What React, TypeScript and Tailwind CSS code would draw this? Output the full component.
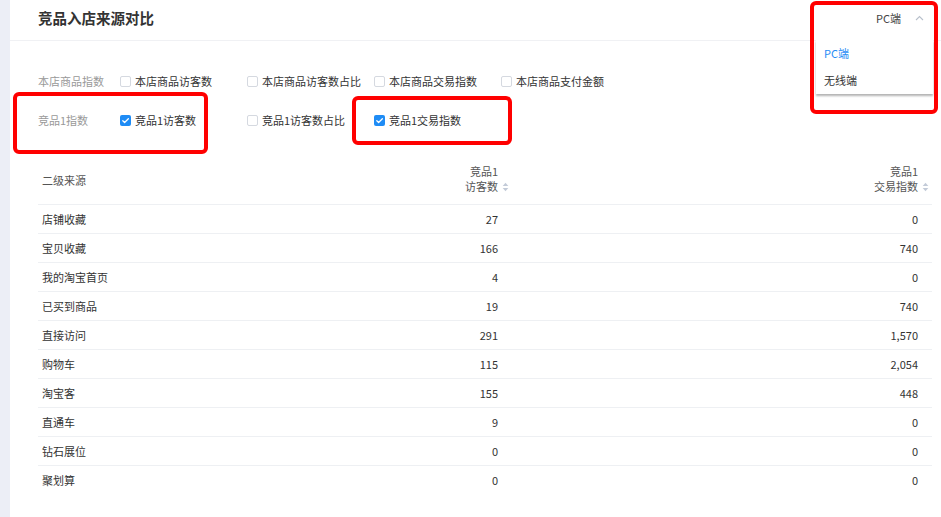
import React from 'react'

const STORE_OPTIONS = [
  { label: '本店商品访客数', checked: false },
  { label: '本店商品访客数占比', checked: false },
  { label: '本店商品交易指数', checked: false },
  { label: '本店商品支付金额', checked: false },
]

const RIVAL_OPTIONS = [
  { label: '竞品1访客数', checked: true },
  { label: '竞品1访客数占比', checked: false },
  { label: '竞品1交易指数', checked: true },
]

const ROWS = [
  { source: '店铺收藏', visitors: '27', trade: '0' },
  { source: '宝贝收藏', visitors: '166', trade: '740' },
  { source: '我的淘宝首页', visitors: '4', trade: '0' },
  { source: '已买到商品', visitors: '19', trade: '740' },
  { source: '直接访问', visitors: '291', trade: '1,570' },
  { source: '购物车', visitors: '115', trade: '2,054' },
  { source: '淘宝客', visitors: '155', trade: '448' },
  { source: '直通车', visitors: '9', trade: '0' },
  { source: '钻石展位', visitors: '0', trade: '0' },
  { source: '聚划算', visitors: '0', trade: '0' },
]

function Checkbox({ checked }: { checked: boolean }) {
  if (checked) {
    return (
      <span className="flex h-[11px] w-[11px] shrink-0 items-center justify-center rounded-[2px] bg-[#1f8cf5]">
        <svg className="h-[9px] w-[9px]" viewBox="0 0 10 10" fill="none">
          <path d="M2 5.2l2 2L8.2 3" stroke="#fff" strokeWidth={1.4} strokeLinecap="round" strokeLinejoin="round" />
        </svg>
      </span>
    )
  }
  return <span className="h-[11px] w-[11px] shrink-0 rounded-[2px] border border-[#d5d9e0] bg-white" />
}

function FilterRow({ title, options }: { title: string; options: { label: string; checked: boolean }[] }) {
  return (
    <div className="flex h-[39px] items-center">
      <span className="w-[82px] text-[#999]">{title}</span>
      {options.map((opt) => (
        <label key={opt.label} className="flex w-[127px] items-center gap-[4px] text-[#333]">
          <Checkbox checked={opt.checked} />
          <span>{opt.label}</span>
        </label>
      ))}
    </div>
  )
}

function SortIcon() {
  return (
    <svg className="h-[10px] w-[9px] shrink-0" viewBox="0 0 9 10" fill="#c3cbd8">
      <path d="M4.5 0.8L7.3 4H1.7z" />
      <path d="M4.5 9.2L1.7 6h5.6z" />
    </svg>
  )
}

function SortHeader({ top, bottom }: { top: string; bottom: string }) {
  return (
    <div className="flex items-start justify-end gap-[3px] pr-[2px] pt-[7px] leading-[15px]">
      <div className="text-right">
        <div>{top}</div>
        <div>{bottom}</div>
      </div>
      <div className="flex h-[30px] items-end pb-[2px]">
        <SortIcon />
      </div>
    </div>
  )
}

export default function App() {
  return (
    <div
      className="relative flex h-[517px] w-[941px] overflow-hidden bg-white text-[11px]"
      style={{ fontFamily: '"Noto Sans CJK SC", "Liberation Sans", sans-serif' }}
    >
      {/* left rail */}
      <div className="w-[10px] shrink-0 bg-[#eceef6]" />

      <div className="flex flex-1 flex-col">
        {/* header */}
        <div className="flex h-[41px] items-center justify-between border-b border-[#f0f1f4] pb-[4px] pl-[28px] pr-[17px]">
          <h1 className="text-[14.5px] font-bold text-[#333]">竞品入店来源对比</h1>
          <button className="flex items-center gap-[14px] text-[#444]">
            <span>PC端</span>
            <svg className="h-[6px] w-[9px]" viewBox="0 0 9 6" fill="none">
              <path d="M1 5l3.5-3.5L8 5" stroke="#b8c0cc" strokeWidth={1.1} />
            </svg>
          </button>
        </div>

        {/* filters */}
        <div className="flex flex-col pl-[28px] pt-[21px]">
          <FilterRow title="本店商品指数" options={STORE_OPTIONS} />
          <FilterRow title="竞品1指数" options={RIVAL_OPTIONS} />
        </div>

        {/* table */}
        <div className="ml-[28px] mr-[9px] mt-[17px]">
          <div className="grid h-[48px] grid-cols-[262px_212px_1fr] border-b border-[#eef0f3] text-[#555]">
            <div className="flex items-center pl-[4px]">二级来源</div>
            <SortHeader top="竞品1" bottom="访客数" />
            <SortHeader top="竞品1" bottom="交易指数" />
          </div>
          {ROWS.map((row, i) => (
            <div
              key={row.source}
              className={`grid h-[29px] grid-cols-[262px_212px_1fr] items-center text-[#333] ${
                i < ROWS.length - 1 ? 'border-b border-[#eef0f3]' : ''
              }`}
            >
              <div className="pl-[4px]">{row.source}</div>
              <div className="pr-[14px] text-right">{row.visitors}</div>
              <div className="pr-[14px] text-right">{row.trade}</div>
            </div>
          ))}
        </div>
      </div>

      {/* dropdown menu */}
      <div className="absolute left-[816px] top-[40px] w-[117px] bg-white shadow-[0_2px_2px_rgba(0,0,0,0.3)]">
        <div className="flex h-[27px] items-center pl-[8px] text-[#1f8cf5]">PC端</div>
        <div className="flex h-[27px] items-center pl-[8px] text-[#333]">无线端</div>
      </div>

      {/* annotation boxes */}
      <div className="pointer-events-none absolute left-[810px] top-[1px] h-[113px] w-[128px] rounded-[6px] border-[4px] border-[#ff0000]" />
      <div className="pointer-events-none absolute left-[13px] top-[92px] h-[62px] w-[195px] rounded-[6px] border-[4px] border-[#ff0000]" />
      <div className="pointer-events-none absolute left-[352px] top-[96px] h-[49px] w-[160px] rounded-[6px] border-[4px] border-[#ff0000]" />
    </div>
  )
}
